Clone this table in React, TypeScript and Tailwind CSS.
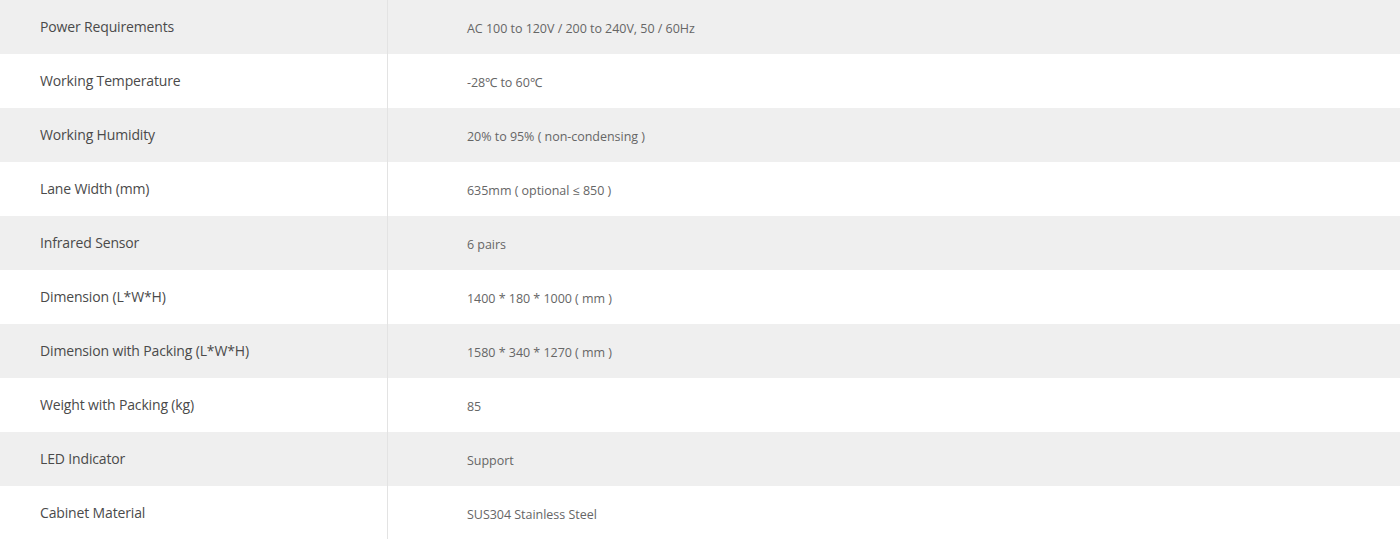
const SPECS: [string, string][] = [
  ["Power Requirements", "AC 100 to 120V / 200 to 240V, 50 / 60Hz"],
  ["Working Temperature", "-28℃ to 60℃"],
  ["Working Humidity", "20% to 95% ( non-condensing )"],
  ["Lane Width (mm)", "635mm ( optional ≤ 850 )"],
  ["Infrared Sensor", "6 pairs"],
  ["Dimension (L*W*H)", "1400 * 180 * 1000 ( mm )"],
  ["Dimension with Packing (L*W*H)", "1580 * 340 * 1270 ( mm )"],
  ["Weight with Packing (kg)", "85"],
  ["LED Indicator", "Support"],
  ["Cabinet Material", "SUS304 Stainless Steel"],
];

export default function App() {
  return (
    <div className="w-[1400px] h-[539px] overflow-hidden bg-white font-['Open_Sans','Liberation_Sans',sans-serif]">
      {SPECS.map(([label, value], i) => (
        <div
          key={label}
          className={`flex h-[54px] ${i % 2 === 0 ? "bg-[#efefef]" : "bg-white"}`}
        >
          <div className="w-[388px] shrink-0 border-r border-[#e3e3e3] pl-10 flex items-center pb-[1px]">
            <span className="text-[14px] tracking-[-0.15px] text-[#4a4a4a]">{label}</span>
          </div>
          <div className="flex-1 pl-[79px] flex items-center pt-[5px]">
            <span className="text-[12.5px] tracking-[-0.03px] text-[#666666]">{value}</span>
          </div>
        </div>
      ))}
    </div>
  );
}
